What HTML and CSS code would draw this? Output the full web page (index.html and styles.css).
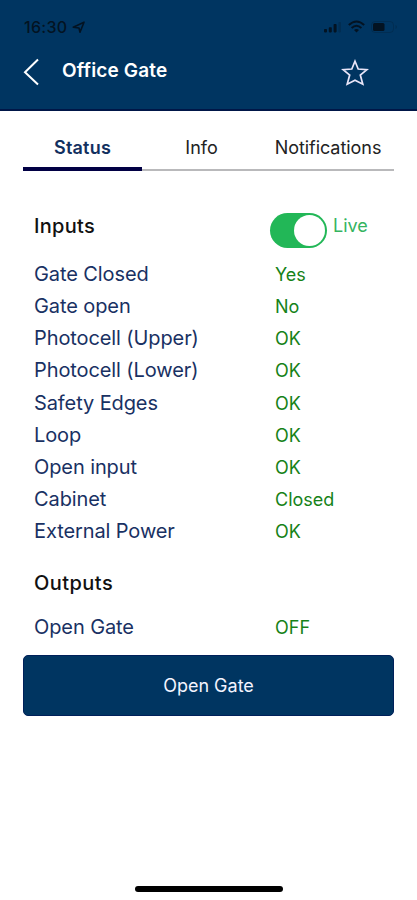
FILE: index.html
```html
<!DOCTYPE html>
<html lang="en">
<head>
<meta charset="utf-8">
<title>Office Gate</title>
<link rel="stylesheet" href="styles.css">
</head>
<body>
<header class="header">
  <div class="statusbar">
    <span class="time">16:30</span>
    <svg class="location" width="14" height="13" viewBox="0 0 14 13"><path d="M1.200 6.200 12 1.200 8 11.200 7 7z" fill="none" stroke="currentColor" stroke-width="1.600" stroke-linejoin="round"/></svg>
    <svg class="indicators" width="76" height="14" viewBox="0 0 76 14">
      <g fill="currentColor"><rect x="1" y="9" width="3" height="3.400" rx=".8"/><rect x="5.800" y="7.200" width="3" height="5.200" rx=".8"/><rect x="10.600" y="4" width="3" height="8.400" rx=".8"/><rect x="15.400" y="2" width="2.600" height="10.400" rx=".8" opacity=".22"/></g>
      <g fill="none" stroke="currentColor" stroke-width="2"><path d="M25.800 5Q33.500-2 41.200 5"/><path d="M28.600 8Q33.500 3.600 38.400 8"/></g>
      <path d="M31 10Q33.500 8 36 10L33.500 12.500z" fill="currentColor"/>
      <rect x="48.500" y="1.500" width="22" height="11" rx="3.500" fill="none" stroke="currentColor" opacity=".22"/>
      <path d="M72.500 5v4q1.500-.7 1.500-2t-1.500-2" fill="currentColor" opacity=".22"/>
      <rect x="50" y="3" width="11.500" height="8" rx="1.500" fill="currentColor"/>
    </svg>
  </div>
  <div class="titlebar">
    <svg class="back" width="16" height="28" viewBox="0 0 16 28"><path d="M15 1.500 2 14.200 15 26.500" fill="none" stroke="currentColor" stroke-width="2"/></svg>
    <h1 class="title">Office Gate</h1>
    <svg class="star" width="28" height="28" viewBox="0 0 28 28"><path d="M14 2.200 17.200 10 26 10.600 19.300 16.100 21.800 25.200 14 21.200 6.200 25.200 8.700 16.100 2 10.600 10.800 10z" fill="none" stroke="currentColor" stroke-width="1.700"/></svg>
  </div>
</header>
<main class="content">
  <nav class="tabs">
    <a class="tab active">Status</a>
    <a class="tab">Info</a>
    <a class="tab notifications">Notifications</a>
  </nav>
  <section class="group inputs">
    <div class="group-head">
      <h2 class="heading">Inputs</h2>
      <span class="switch"><span class="knob"></span></span>
      <span class="live">Live</span>
    </div>
    <dl class="list">
      <dt>Gate Closed</dt><dd>Yes</dd>
      <dt>Gate open</dt><dd>No</dd>
      <dt>Photocell (Upper)</dt><dd>OK</dd>
      <dt>Photocell (Lower)</dt><dd>OK</dd>
      <dt>Safety Edges</dt><dd>OK</dd>
      <dt>Loop</dt><dd>OK</dd>
      <dt>Open input</dt><dd>OK</dd>
      <dt>Cabinet</dt><dd>Closed</dd>
      <dt>External Power</dt><dd>OK</dd>
    </dl>
  </section>
  <section class="group outputs">
    <h2 class="heading">Outputs</h2>
    <dl class="list">
      <dt>Open Gate</dt><dd>OFF</dd>
    </dl>
  </section>
  <button class="action">Open Gate</button>
</main>
<footer class="home"></footer>
</body>
</html>
```
FILE: styles.css
```css
* { box-sizing: border-box; }
body {
  margin: 0;
  height: 900px;
  display: flex;
  flex-direction: column;
  background: #fff;
  font-family: Inter, "Liberation Sans", sans-serif;
  overflow: hidden;
}
h1, h2, dl, dd { margin: 0; }
.header {
  height: 111px;
  background: #003561;
  border-bottom: 2px solid #001647;
  color: #fff;
}
.statusbar {
  height: 46px;
  padding: 18px 18px 0 24px;
  display: flex;
  align-items: flex-start;
  color: #031322;
}
.time { font-size: 16px; font-weight: 500; line-height: 19px; letter-spacing: .3px; }
.location { margin: 3px 0 0 5px; }
.indicators { margin: 2px 0 0 auto; }
.titlebar {
  padding: 0 48px 0 23px;
  display: flex;
  align-items: flex-start;
}
.back { margin-top: 12px; }
.title {
  margin: 13px 0 0 23px;
  font-size: 19px;
  font-weight: 600;
  line-height: 24px;
  letter-spacing: .15px;
}
.star { margin: 13px 0 0 auto; color: #e9e5f8; }
.content { padding: 0 23px; }
.tabs {
  height: 60px;
  display: grid;
  grid-template-columns: 119px 119px 133px;
  background: linear-gradient(#b9b9bb, #b9b9bb) 0 58px / 100% 2px no-repeat;
}
.tab {
  padding-top: 25px;
  font-size: 18px;
  line-height: 24px;
  text-align: center;
  color: #222;
}
.tab.active {
  font-weight: 600;
  letter-spacing: .2px;
  color: #12305f;
  border-bottom: 4px solid #010044;
}
.tab.notifications { padding-left: 1px; letter-spacing: -.05px; }
.group { padding-left: 11px; }
.group-head { display: flex; align-items: flex-start; height: 87px; padding-top: 42px; }
.heading { font-size: 20px; font-weight: 500; line-height: 26px; letter-spacing: .3px; color: #111; }
.group-head .heading { width: 236px; }
.switch {
  width: 57px;
  height: 35px;
  padding: 2px;
  display: flex;
  justify-content: flex-end;
  border-radius: 18px;
  background: #22b757;
}
.knob { width: 31px; height: 31px; border-radius: 50%; background: #fff; }
.live { margin-left: 6px; font-size: 18px; line-height: 26px; color: #35b45f; }
.list {
  display: grid;
  grid-template-columns: 241px 1fr;
  grid-auto-rows: 32.15px;
  line-height: 32px;
}
.list dt { font-size: 20px; letter-spacing: -.1px; color: #193163; white-space: nowrap; }
.list dd { padding-top: 1px; font-size: 18px; color: #168218; }
.outputs { padding-top: 23px; }
.outputs .heading { letter-spacing: .45px; }
.outputs .list { margin-top: 15px; }
.action {
  display: block;
  width: 100%;
  height: 61px;
  margin-top: 12px;
  padding: 0;
  border: 1px solid #00205a;
  border-radius: 5px;
  background: #003561;
  color: #f4f4ff;
  font: 400 18px/24px Inter, "Liberation Sans", sans-serif;
}
.home {
  width: 148px;
  height: 6px;
  margin: auto auto 8px;
  border-radius: 3px;
  background: #000;
}
```
